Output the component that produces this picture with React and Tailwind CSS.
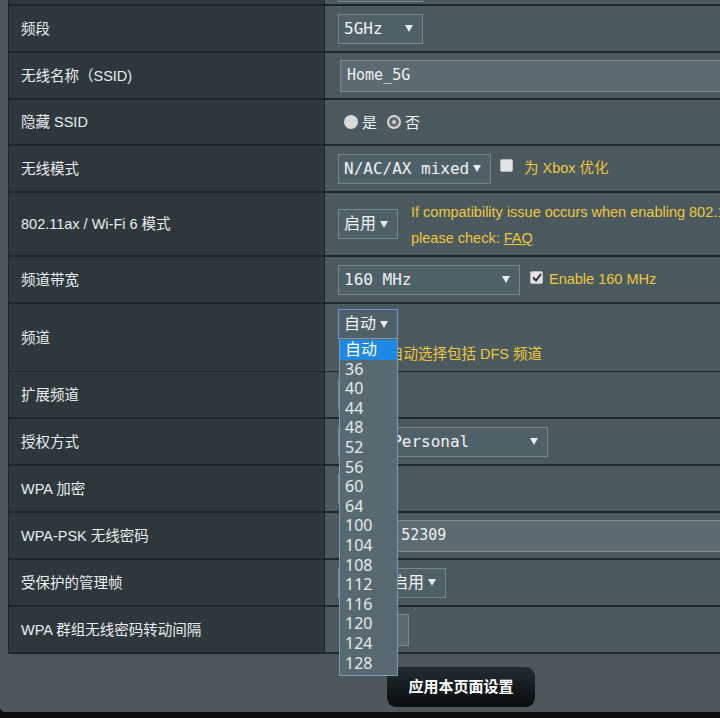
const SANS = "font-['Liberation_Sans','Noto_Sans_CJK_SC',sans-serif]";
const MONO = "font-['DejaVu_Sans_Mono','Noto_Sans_CJK_SC',monospace]";

const CHANNELS = ["自动", "36", "40", "44", "48", "52", "56", "60", "64", "100", "104", "108", "112", "116", "120", "124", "128"];

function Arrow() {
  return (
    <svg width="8" height="7" viewBox="0 0 8 7" className="shrink-0">
      <path d="M0 0H8L4 7Z" fill="#e6ebed" />
    </svg>
  );
}

function Select({ value, width, focused, children }) {
  return (
    <div
      className={`relative flex h-[30px] shrink-0 items-center justify-between border bg-[#4f6168] pl-[5px] pr-[9px] text-[16px] text-[#eef1f2] ${MONO} ${
        focused ? "border-[#6d98d4]" : "border-[#76878d]"
      } ${width}`}
    >
      <span className="whitespace-nowrap">{value}</span>
      <Arrow />
      {children}
    </div>
  );
}

function TextInput({ value, width }) {
  return (
    <div
      className={`ml-[2px] flex h-[32px] shrink-0 items-center border border-[#7a8b91] bg-[#5a6b71] pl-[6px] text-[15px] text-[#eef1f2] ${MONO} ${width}`}
    >
      {value}
    </div>
  );
}

function Checkbox({ checked, className }) {
  return (
    <span
      className={`flex h-[13px] w-[13px] shrink-0 items-center justify-center rounded-[2px] border border-[#b9bcbe] bg-[#e2e4e5] ${className}`}
    >
      {checked && (
        <svg width="10" height="9" viewBox="0 0 10 9">
          <path d="M1 4.5L4 7.5L9 1" fill="none" stroke="#2d2f30" strokeWidth="2" />
        </svg>
      )}
    </span>
  );
}

function Radio({ checked }) {
  return (
    <span className="flex h-[14px] w-[14px] shrink-0 items-center justify-center rounded-full bg-[#d8dadb]">
      {checked && <span className="h-[10px] w-[10px] rounded-full border-[3px] border-[#66696b] bg-[#d0d2d3]" />}
    </span>
  );
}

function Row({ label, height = "h-[47px]", align = "items-center", children }) {
  return (
    <div className={`grid grid-cols-[316px_1fr] border-b-2 border-[#1f272a] ${height}`}>
      <div className={`flex items-center border-r border-[#1c2326] bg-[#2e383c] pl-3 pt-[2px] text-[14.5px] text-[#e9ecee] ${SANS}`}>
        {label}
      </div>
      <div className={`flex bg-[#4a5a5f] pl-[13px] ${align}`}>{children}</div>
    </div>
  );
}

function ChannelList() {
  return (
    <div className="absolute left-[0px] top-full z-10 w-[59px] border border-[#7f97b6] bg-[#586a71] pb-[2px] pt-[1px]">
      {CHANNELS.map((ch, i) => (
        <div
          key={ch}
          className={`h-[19.6px] pl-[5px] text-[16px] leading-[19.6px] font-['Noto_Sans','Noto_Sans_CJK_SC',sans-serif] ${
            i === 0 ? "bg-[#1e88e5] text-white" : "text-[#e4eaec]"
          }`}
        >
          {ch}
        </div>
      ))}
    </div>
  );
}

const YELLOW = "text-[#f0c63c]";

export default function App() {
  return (
    <div className="h-[718px] w-[720px] overflow-hidden bg-[#0d0d0d]">
      <div className="w-[922px] rounded-b-[5px] bg-[#4e585c]">
        <div className="ml-[8px] w-[906px] border-l border-[#1e2528]">
          <div className="grid h-[6px] grid-cols-[316px_1fr] border-b-2 border-[#1f272a]">
            <div className="border-r border-[#1c2326] bg-[#2e383c]" />
            <div className="bg-[#4a5a5f] pl-[13px]">
              <div className="h-[2px] w-[85px] border-x border-b border-[#76878d] bg-[#4f6168]" />
            </div>
          </div>

          <Row label="频段">
            <Select value="5GHz" width="w-[85px]" />
          </Row>

          <Row label="无线名称（SSID)">
            <TextInput value="Home_5G" width="w-[420px]" />
          </Row>

          <Row label="隐藏 SSID" height="h-[46px]">
            <div className="ml-[6px] flex items-center text-[15px] text-[#eef1f2] font-['Noto_Sans_CJK_SC',sans-serif]">
              <Radio />
              <span className="ml-[4px]">是</span>
              <span className="ml-[10px]" />
              <Radio checked />
              <span className="ml-[4px]">否</span>
            </div>
          </Row>

          <Row label="无线模式">
            <Select value="N/AC/AX mixed" width="w-[153px]" />
            <Checkbox className="mb-[6px] ml-[9px]" />
            <span className={`ml-[11px] text-[14.5px] ${YELLOW} ${SANS}`}>为 Xbox 优化</span>
          </Row>

          <Row label="802.11ax / Wi-Fi 6 模式" height="h-[64px]">
            <Select value="启用" width="w-[60px]" />
            <div className={`ml-[13px] mt-[2px] whitespace-nowrap text-[14.5px] leading-[26px] ${YELLOW} ${SANS}`}>
              <div>If compatibility issue occurs when enabling 802.11ax / Wi-Fi 6 mode,</div>
              <div>
                please check: <span className="underline">FAQ</span>
              </div>
            </div>
          </Row>

          <Row label="频道带宽">
            <Select value="160 MHz" width="w-[182px]" />
            <Checkbox checked className="mb-[5px] ml-[10px]" />
            <span className={`ml-[6px] text-[14.5px] ${YELLOW} ${SANS}`}>Enable 160 MHz</span>
          </Row>

          <Row label="频道" height="h-[68px]" align="flex-col items-start">
            <div className="mt-[5px]">
              <Select value="自动" width="w-[60px]" focused>
                <ChannelList />
              </Select>
            </div>
            <div className="flex h-[32px] items-center">
              <Checkbox className="ml-[37px]" />
              <span className={`ml-[1px] text-[14.5px] ${YELLOW} ${SANS}`}>自动选择包括 DFS 频道</span>
            </div>
          </Row>

          <Row label="扩展频道">
            <Select value="自动" width="w-[60px]" />
          </Row>

          <Row label="授权方式">
            <Select value="WPA2-Personal" width="w-[210px]" />
          </Row>

          <Row label="WPA 加密">
            <Select value="AES" width="w-[60px]" />
          </Row>

          <Row label="WPA-PSK 无线密码">
            <TextInput value="wifi8.52309" width="w-[420px]" />
          </Row>

          <Row label="受保护的管理帧">
            <Select value="可选择启用" width="w-[108px]" />
          </Row>

          <Row label="WPA 群组无线密码转动间隔">
            <TextInput value="3600" width="w-[69px]" />
          </Row>
        </div>

        <div className="flex h-[58px] justify-center pt-[13px]">
          <button
            type="button"
            className={`h-[40px] w-[148px] rounded-[9px] bg-linear-to-b from-[#222d32] to-[#090c0e] text-[15px] font-bold text-white ${SANS}`}
          >
            应用本页面设置
          </button>
        </div>
      </div>
    </div>
  );
}
